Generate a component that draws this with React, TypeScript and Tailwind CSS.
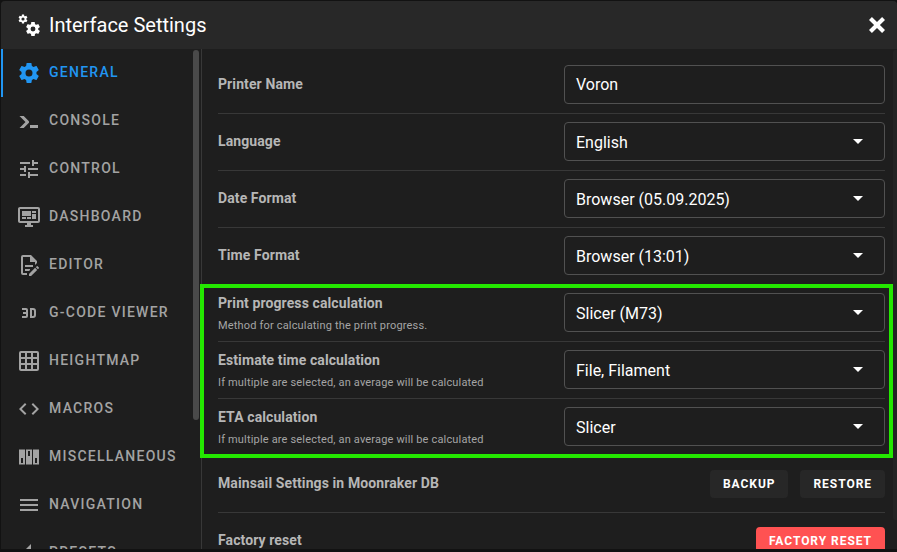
import React from "react";

const mdi = {
  cog: "M12,15.5A3.5,3.5 0 0,1 8.5,12A3.5,3.5 0 0,1 12,8.5A3.5,3.5 0 0,1 15.5,12A3.5,3.5 0 0,1 12,15.5M19.43,12.97C19.47,12.65 19.5,12.33 19.5,12C19.5,11.67 19.47,11.34 19.43,11L21.54,9.37C21.73,9.22 21.78,8.95 21.66,8.73L19.66,5.27C19.54,5.05 19.27,4.96 19.05,5.05L16.56,6.05C16.04,5.66 15.5,5.32 14.87,5.07L14.5,2.42C14.46,2.18 14.25,2 14,2H10C9.75,2 9.54,2.18 9.5,2.42L9.13,5.07C8.5,5.32 7.96,5.66 7.44,6.05L4.95,5.05C4.73,4.96 4.46,5.05 4.34,5.27L2.34,8.73C2.21,8.95 2.27,9.22 2.46,9.37L4.57,11C4.53,11.34 4.5,11.67 4.5,12C4.5,12.33 4.53,12.65 4.57,12.97L2.46,14.63C2.27,14.78 2.21,15.05 2.34,15.27L4.34,18.73C4.46,18.95 4.73,19.03 4.95,18.95L7.44,17.94C7.96,18.34 8.5,18.68 9.13,18.93L9.5,21.58C9.54,21.82 9.75,22 10,22H14C14.25,22 14.46,21.82 14.5,21.58L14.87,18.93C15.5,18.67 16.04,18.34 16.56,17.94L19.05,18.95C19.27,19.03 19.54,18.95 19.66,18.73L21.66,15.27C21.78,15.05 21.73,14.78 21.54,14.63L19.43,12.97Z",
  console: "M13,19V16H21V19H13M8.5,13L2.47,7H6.71L11.67,11.95C12.25,12.54 12.25,13.5 11.67,14.08L6.74,19H2.5L8.5,13Z",
  tune: "M3,17V19H9V17H3M3,5V7H13V5H3M13,21V19H21V17H13V15H11V21H13M7,9V11H3V13H7V15H9V9H7M21,13V11H11V13H21M15,9H17V7H21V5H17V3H15V9Z",
  dashboard: "M21,16V4H3V16H21M21,2A2,2 0 0,1 23,4V16A2,2 0 0,1 21,18H14V20H16V22H8V20H10V18H3C1.89,18 1,17.1 1,16V4C1,2.89 1.89,2 3,2H21M5,6H14V11H5V6M15,6H19V8H15V6M19,9V14H15V9H19M5,12H9V14H5V12M10,12H14V14H10V12Z",
  editor: "M8,12H16V14H8V12M10,20H6V4H13V9H18V12.1L20,10.1V8L14,2H6A2,2 0 0,0 4,4V20A2,2 0 0,0 6,22H10V20M8,18H12.1L13,17.1V16H8V18M20.2,13C20.3,13 20.5,13.1 20.6,13.2L21.9,14.5C22.1,14.7 22.1,15.1 21.9,15.3L20.9,16.3L18.8,14.2L19.8,13.2C19.9,13.1 20,13 20.2,13M20.2,16.9L14.1,23H12V20.9L18.1,14.8L20.2,16.9Z",
  video3d: "M5,7H9A2,2 0 0,1 11,9V15A2,2 0 0,1 9,17H5V15H9V13H6V11H9V9H5V7M13,7H16A3,3 0 0,1 19,10V14A3,3 0 0,1 16,17H13V7M16,15A1,1 0 0,0 17,14V10A1,1 0 0,0 16,9H15V15H16Z",
  grid: "M10,4V8H14V4H10M16,4V8H20V4H16M16,10V14H20V10H16M16,16V20H20V16H16M14,20V16H10V20H14M8,20V16H4V20H8M8,14V10H4V14H8M8,8V4H4V8H8M10,14H14V10H10V14M4,2H20A2,2 0 0,1 22,4V20A2,2 0 0,1 20,22H4C2.92,22 2,21.1 2,20V4A2,2 0 0,1 4,2Z",
  code: "M14.6,16.6L19.2,12L14.6,7.4L16,6L22,12L16,18L14.6,16.6M9.4,16.6L4.8,12L9.4,7.4L8,6L2,12L8,18L9.4,16.6Z",
  dip: "M2,4.5H8V19.5H2V4.5M4,13V18H6V13H4M9,4.5H15V19.5H9V4.5M11,6V11H13V6H11M16,4.5H22V19.5H16V4.5M18,13V18H20V13H18Z",
  menu: "M3,6H21V8H3V6M3,11H21V13H3V11M3,16H21V18H3V16Z",
  presets: "M14,3V24H-7Z",
  close: "M20 6.91L17.09 4L12 9.09L6.91 4L4 6.91L9.09 12L4 17.09L6.91 20L12 14.91L17.09 20L20 17.09L14.91 12L20 6.91Z",
};

function Icon({ d, className }: { d: string; className?: string }) {
  return (
    <svg viewBox="0 0 24 24" className={className} fill="currentColor" fillRule="evenodd">
      <path d={d} />
    </svg>
  );
}

const navItems = [
  { label: "GENERAL", icon: mdi.cog, active: true },
  { label: "CONSOLE", icon: mdi.console },
  { label: "CONTROL", icon: mdi.tune },
  { label: "DASHBOARD", icon: mdi.dashboard },
  { label: "EDITOR", icon: mdi.editor },
  { label: "G-CODE VIEWER", icon: mdi.video3d },
  { label: "HEIGHTMAP", icon: mdi.grid },
  { label: "MACROS", icon: mdi.code },
  { label: "MISCELLANEOUS", icon: mdi.dip },
  { label: "NAVIGATION", icon: mdi.menu },
  { label: "PRESETS", icon: mdi.presets },
];

function Field({ value, select }: { value: string; select?: boolean }) {
  return (
    <div className="flex h-[39px] w-[321px] shrink-0 items-center justify-between rounded-[4px] border border-[#515151] pl-[11px] pr-[21px] text-base text-white">
      <span className={select ? "pt-[2px]" : ""}>{value}</span>
      {select && <span className="h-0 w-0 border-x-[5px] border-t-[5px] border-x-transparent border-t-white" />}
    </div>
  );
}

function Row({ label, hint, value, select = true }: { label: string; hint?: string; value: string; select?: boolean }) {
  return (
    <div className={hint ? "flex h-[57px] items-start justify-between border-b border-[#383838] pt-[8px]" : "flex h-[57px] items-center justify-between border-b border-[#383838] pb-px"}>
      <div className={hint ? "" : "-mt-[2px]"}>
        <div className="text-sm font-bold leading-[20px] tracking-[0.1px] text-[#b6b6b6]">{label}</div>
        {hint && <div className="mt-[6px] text-[11px] leading-[14px] tracking-[0.17px] text-[#a5a5a5]">{hint}</div>}
      </div>
      <Field value={value} select={select} />
    </div>
  );
}

function ActionButton({ label, danger }: { label: string; danger?: boolean }) {
  return (
    <div
      className={
        danger
          ? "flex h-[28px] shrink-0 items-center rounded-[4px] bg-[#ff5252] px-[13px] text-xs font-bold tracking-[0.08em] text-white"
          : "flex h-[28px] shrink-0 items-center rounded-[4px] bg-[#272727] px-[13px] text-xs font-bold tracking-[0.08em] text-white"
      }
    >
      {label}
    </div>
  );
}

export default function App() {
  return (
    <div className="h-[552px] w-[897px] overflow-hidden bg-[#121212] pt-px font-['Roboto',sans-serif]">
      <div className="ml-px flex h-[548px] flex-col overflow-hidden rounded-t-[4px] bg-[#1e1e1e]">
        {/* title bar */}
        <div className="flex h-[48px] shrink-0 items-center justify-between bg-[#282828] pl-[17px] pr-[8px]">
          <div className="flex items-center gap-[7px]">
            <svg viewBox="0 0 24 24" className="h-[24px] w-[24px] overflow-visible text-white" fill="currentColor">
              <g transform="translate(6.6 7.6) scale(0.7)">
                <path d={mdi.cog} fillRule="evenodd" />
              </g>
              <g transform="translate(-0.4 0.6) scale(0.45)">
                <path d={mdi.cog} fillRule="evenodd" />
              </g>
            </svg>
            <span className="text-xl text-white">Interface Settings</span>
          </div>
          <Icon d={mdi.close} className="h-[24px] w-[24px] text-white" />
        </div>

        <div className="relative flex min-h-0 flex-1">
          {/* sidebar */}
          <div className="relative w-[201px] shrink-0 overflow-hidden border-r border-[#383838]">
            <div className="absolute right-[2px] top-[1px] h-[370px] w-[6px] rounded-[3px] bg-[#4a4a4a]" />
            {navItems.map((item) => (
              <div
                key={item.label}
                className={
                  item.active
                    ? "flex h-[48px] items-center gap-[8px] border-l-2 border-[#2196f3] pl-[14px] text-sm font-medium tracking-[0.09em] text-[#2196f3]"
                    : "flex h-[48px] items-center gap-[8px] pl-[16px] text-sm font-medium tracking-[0.09em] text-[#a3a3a3]"
                }
              >
                <Icon d={item.icon} className="h-[24px] w-[24px] shrink-0" />
                <span className="-mt-[2px]">{item.label}</span>
              </div>
            ))}
          </div>

          {/* settings list */}
          <div className="min-w-0 flex-1 overflow-hidden pl-[16px] pr-[12px] pt-[8px]">
            <Row label="Printer Name" value="Voron" select={false} />
            <Row label="Language" value="English" />
            <Row label="Date Format" value="Browser (05.09.2025)" />
            <Row label="Time Format" value="Browser (13:01)" />
            <Row label="Print progress calculation" hint="Method for calculating the print progress." value="Slicer (M73)" />
            <Row label="Estimate time calculation" hint="If multiple are selected, an average will be calculated" value="File, Filament" />
            <Row label="ETA calculation" hint="If multiple are selected, an average will be calculated" value="Slicer" />
            <div className="flex h-[57px] items-start justify-between border-b border-[#383838] pt-[14px]">
              <div className="mt-[3px] text-sm font-bold leading-[20px] tracking-[0.1px] text-[#b6b6b6]">Mainsail Settings in Moonraker DB</div>
              <div className="flex gap-[12px]">
                <ActionButton label="BACKUP" />
                <ActionButton label="RESTORE" />
              </div>
            </div>
            <div className="flex items-start justify-between pt-[14px]">
              <div className="mt-[3px] text-sm font-bold leading-[20px] tracking-[0.1px] text-[#b6b6b6]">Factory reset</div>
              <ActionButton label="FACTORY RESET" danger />
            </div>
          </div>

          {/* main scrollbar */}
          <div className="absolute right-0 top-px h-[470px] w-[4px] rounded-l-[2px] bg-[#242424]" />
          {/* green highlight */}
          <div className="absolute left-[199px] top-[235px] h-[174px] w-[693px] border-4 border-[#24e800]" />
        </div>
      </div>
    </div>
  );
}
